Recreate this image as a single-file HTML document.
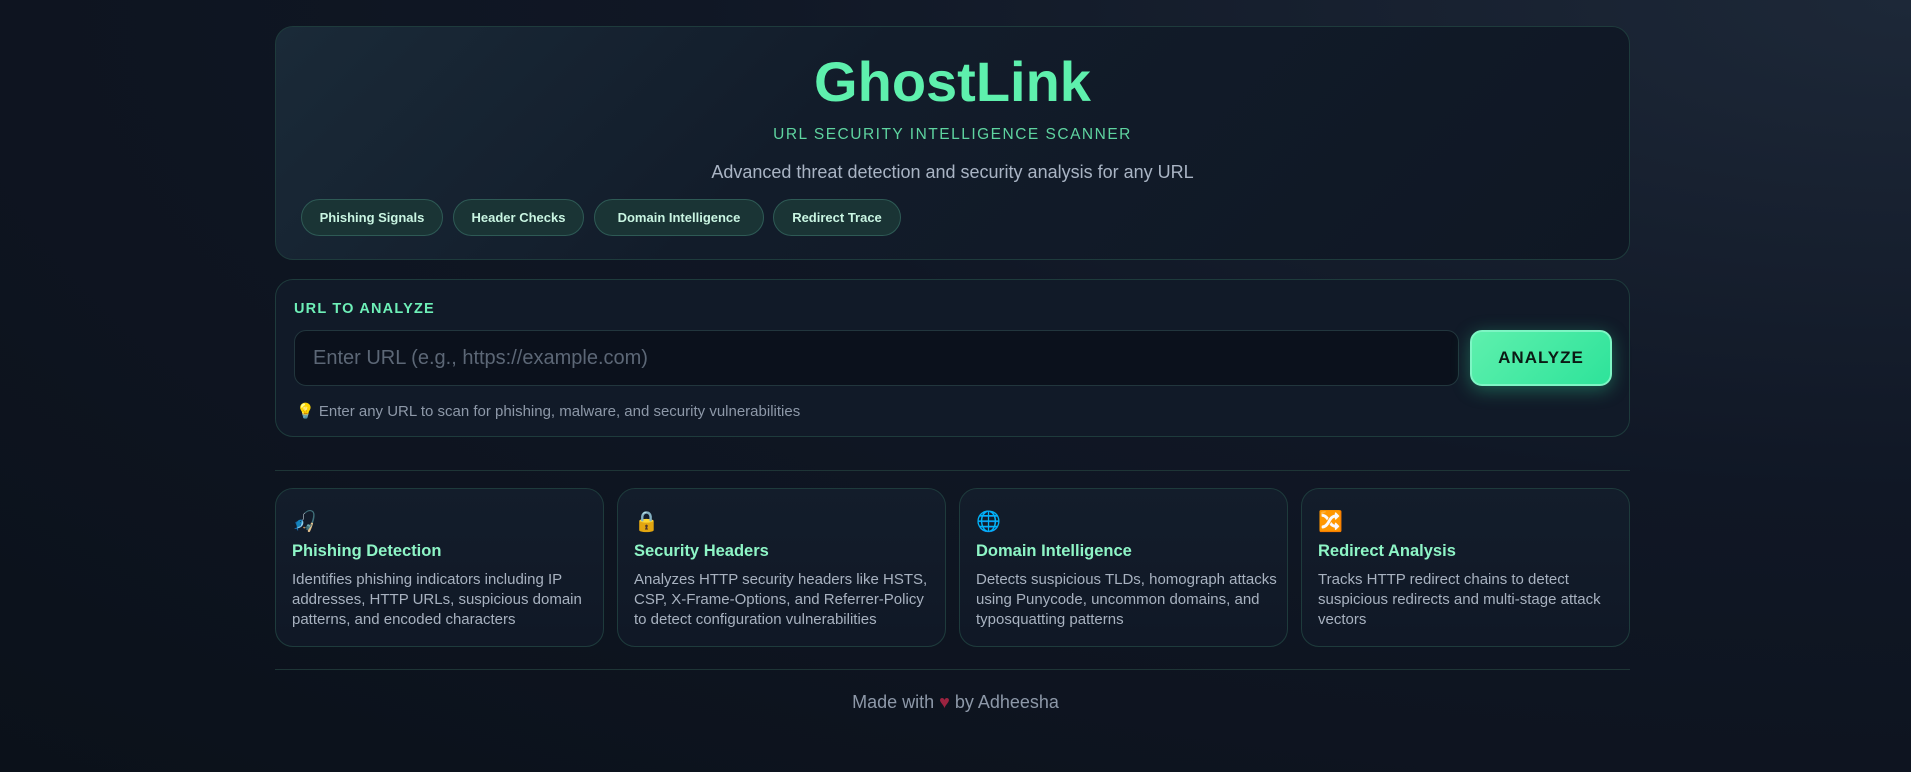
<!DOCTYPE html>
<html><head><meta charset="utf-8"><style>
*{box-sizing:border-box;margin:0;padding:0}
html,body{width:1911px;height:772px;overflow:hidden}
body{font-family:"Liberation Sans","DejaVu Sans",sans-serif;background:radial-gradient(ellipse at 100% 0%,#1d2838 0%,#101725 45%,#0b111a 100%);background-color:#0d131e;color:#cbd5e1;position:relative}
.card{position:absolute;border:1px solid #1e3b3c;border-radius:18px;background:#111a28}
.hdr{left:275px;top:26px;width:1355px;height:234px;background:linear-gradient(135deg,#1a2a38 0%,#121c2a 40%,#0f1724 100%)}
.title{position:absolute;left:0;right:0;top:20px;text-align:center;font-size:56px;font-weight:bold;color:#5ef0ad;line-height:70px}
.sub{position:absolute;left:0;right:0;top:99px;text-align:center;font-size:15.5px;letter-spacing:1.5px;color:#5ed4a0}
.desc{position:absolute;left:0;right:0;top:135px;text-align:center;font-size:18px;color:#a9b4c4}
.pill{position:absolute;top:172px;height:37px;border:1px solid #2e5a55;border-radius:19px;background:#1a3435;color:#c9f5e2;font-size:13px;font-weight:bold;line-height:35px;text-align:center}
.url{left:275px;top:279px;width:1355px;height:158px}
.lbl{position:absolute;left:18px;top:21px;font-size:14.5px;font-weight:bold;letter-spacing:1.2px;color:#6ef0b8}
.inp{position:absolute;left:18px;top:50px;width:1165px;height:56px;border:1px solid #22363d;border-radius:12px;background:#0b111c;color:#5c6776;font-size:20px;line-height:54px;padding-left:18px}
.btn{position:absolute;left:1194px;top:50px;width:142px;height:56px;border-radius:12px;background:linear-gradient(135deg,#5ef0ad,#2ee39a);border:2px solid #7ef5c4;box-shadow:0 4px 18px rgba(52,230,160,.35);color:#0b1a14;font-weight:bold;font-size:17px;letter-spacing:1px;text-align:center;line-height:52px}
.hint{position:absolute;left:20px;top:122px;font-size:15px;color:#8d98a8}
.hr{position:absolute;left:275px;width:1355px;height:1px;background:#1e3536}
.f{top:488px;width:329px;height:159px;background:linear-gradient(180deg,#131d2b,#101826)}
.f .ic{position:absolute;left:16px;top:20px;font-size:20px}
.f h3{position:absolute;left:16px;top:53px;font-size:16.5px;color:#8ef5c6;font-weight:bold}
.f p{position:absolute;left:16px;top:81px;right:10px;font-size:15px;line-height:20px;color:#a8b2c0}
.foot{position:absolute;left:0;right:0;top:692px;text-align:center;font-size:18px;color:#8d98a8}
</style></head><body>
<div class="card hdr">
<div class="title">GhostLink</div>
<div class="sub">URL SECURITY INTELLIGENCE SCANNER</div>
<div class="desc">Advanced threat detection and security analysis for any URL</div>
<div class="pill" style="left:25px;width:142px">Phishing Signals</div>
<div class="pill" style="left:177px;width:131px">Header Checks</div>
<div class="pill" style="left:318px;width:170px">Domain Intelligence</div>
<div class="pill" style="left:497px;width:128px">Redirect Trace</div>
</div>
<div class="card url">
<div class="lbl">URL TO ANALYZE</div>
<div class="inp">Enter URL (e.g., https://example.com)</div>
<div class="btn">ANALYZE</div>
<div class="hint"><span style="color:#b59a4a">💡</span> Enter any URL to scan for phishing, malware, and security vulnerabilities</div>
</div>
<div class="hr" style="top:470px"></div>
<div class="card f" style="left:275px"><div class="ic">🎣</div><h3>Phishing Detection</h3><p>Identifies phishing indicators including IP addresses, HTTP URLs, suspicious domain patterns, and encoded characters</p></div>
<div class="card f" style="left:617px"><div class="ic">🔒</div><h3>Security Headers</h3><p>Analyzes HTTP security headers like HSTS, CSP, X-Frame-Options, and Referrer-Policy to detect configuration vulnerabilities</p></div>
<div class="card f" style="left:959px"><div class="ic">🌐</div><h3>Domain Intelligence</h3><p>Detects suspicious TLDs, homograph attacks using Punycode, uncommon domains, and typosquatting patterns</p></div>
<div class="card f" style="left:1301px"><div class="ic">🔀</div><h3>Redirect Analysis</h3><p>Tracks HTTP redirect chains to detect suspicious redirects and multi-stage attack vectors</p></div>
<div class="hr" style="top:669px"></div>
<div class="foot">Made with <span style="color:#9b2340">♥</span> by Adheesha</div>
</body></html>
